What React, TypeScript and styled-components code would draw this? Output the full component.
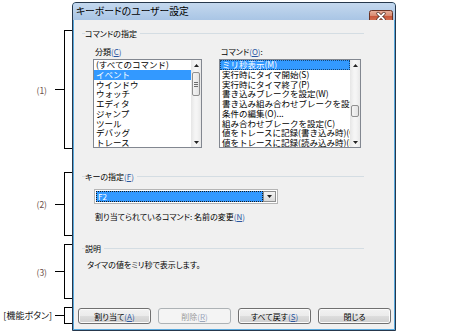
import React from "react";
import styled, { createGlobalStyle } from "styled-components";

const GlobalStyle = createGlobalStyle`
  html, body {
    margin: 0;
    padding: 0;
    background: #fff;
  }
  body {
    font-family: "Noto Sans CJK JP", "Noto Sans", sans-serif;
    font-feature-settings: "palt";
    color: #000;
  }
`;

// whole picture: notes on the left, dialog on the right
const Page = styled.div`
  width: 474px;
  height: 336px;
  display: flex;
  align-items: flex-start;
`;

// the (1) (2) (3) brackets column
const Notes = styled.div`
  width: 72px;
  padding-top: 30px;
  display: flex;
  flex-direction: column;
`;

const Bracket = styled.div<{ $h: number; $top: number }>`
  height: ${(p) => p.$h}px;
  margin-top: ${(p) => p.$top}px;
  display: flex;
  align-items: center;
  justify-content: flex-end;
`;

const NoteLabel = styled.span<{ $gap: number; $dark?: boolean }>`
  font-size: ${(p) => (p.$dark ? 9 : 8.5)}px;
  line-height: 10px;
  white-space: nowrap;
  margin-right: ${(p) => p.$gap}px;
  color: ${(p) => (p.$dark ? "#111" : "#6a5048")};
`;

const Tick = styled.div`
  width: 9px;
  height: 1px;
  background: #000;
`;

const BracketLine = styled.div`
  box-sizing: border-box;
  width: 8px;
  height: 100%;
  border: 1px solid #000;
  border-right: none;
`;

// dialog window frame
const Window = styled.div`
  box-sizing: border-box;
  width: 324px;
  height: 329px;
  margin-top: 2px;
  padding: 0 1px 1px;
  border: 1px solid #26384d;
  border-radius: 4px 4px 0 0;
  background: #58a8dc;
  display: flex;
  flex-direction: column;
  overflow: hidden;
`;

const TitleBar = styled.div`
  flex: none;
  height: 17px;
  margin: 0 -1px;
  padding: 0 2px 0 3px;
  background: linear-gradient(#c4d8ee, #a9c5e5);
  display: flex;
  align-items: flex-start;
  justify-content: space-between;
`;

const Title = styled.span`
  font-size: 9.8px;
  line-height: 16px;
  color: #000;
`;

const CloseButton = styled.div`
  margin-top: 1px;
  width: 24px;
  height: 13px;
`;

const Body = styled.div`
  flex: 1;
  background: #f0f0f0;
  padding: 7px 30px 5px 4px;
  display: flex;
  flex-direction: column;
`;

const GroupHeader = styled.div<{ $top: number }>`
  height: 12px;
  margin: ${(p) => p.$top}px 0 0 4px;
  display: flex;
  align-items: center;
  font-size: 8px;
  white-space: nowrap;

  &::before {
    content: "";
    width: 3px;
    height: 1px;
    background: #d4dde3;
  }
  &::after {
    content: "";
    flex: 1;
    height: 1px;
    margin-left: 3px;
    background: #d4dde3;
  }
`;

const Key = styled.span`
  color: #2b56a0;
  u {
    text-underline-offset: 1px;
  }
`;

const ListsRow = styled.div`
  margin: 8px 0 0 15px;
  display: flex;
  gap: 17px;
`;

const ListColumn = styled.div`
  display: flex;
  flex-direction: column;
`;

const FieldLabel = styled.div`
  font-size: 8px;
  line-height: 10px;
  padding-left: 2px;
  margin-bottom: 2px;
`;

const ListBox = styled.div<{ $w: number }>`
  box-sizing: border-box;
  width: ${(p) => p.$w}px;
  height: 89px;
  border: 1px solid #828790;
  background: #fff;
  display: flex;
`;

const Items = styled.div`
  flex: 1;
  min-width: 0;
  overflow: hidden;
`;

const Item = styled.div<{ $selected?: boolean; $focus?: boolean }>`
  height: 9.75px;
  line-height: 9.75px;
  padding-left: 2px;
  font-size: 8.5px;
  font-feature-settings: normal;
  white-space: nowrap;
  background: ${(p) => (p.$selected ? "#3399ff" : "transparent")};
  color: ${(p) => (p.$selected ? "#fff" : "#000")};
  outline: ${(p) => (p.$focus ? "1px dotted rgba(0,0,0,0.55)" : "none")};
  outline-offset: -1px;
`;

const ScrollBar = styled.div`
  flex: none;
  width: 10px;
  background: linear-gradient(90deg, #e6e6e6, #f5f5f5 40%, #f5f5f5 60%, #e8e8e8);
  display: flex;
  flex-direction: column;
`;

const ScrollArrow = styled.div<{ $down?: boolean }>`
  height: 10px;
  margin-top: ${(p) => (p.$down ? "auto" : "0")};
  display: flex;
  align-items: center;
  justify-content: center;
`;

const Thumb = styled.div<{ $top: number; $h: number }>`
  box-sizing: border-box;
  height: ${(p) => p.$h}px;
  margin: ${(p) => p.$top}px 1px 0;
  border: 1px solid #8f8f8f;
  border-radius: 2px;
  background: linear-gradient(90deg, #f4f4f4, #e3e3e3);
  display: flex;
  flex-direction: column;
  align-items: center;
  justify-content: center;
  gap: 1px;

  i {
    width: 4px;
    height: 1px;
    background: #6c6c6c;
  }
`;

const Combo = styled.div`
  box-sizing: border-box;
  width: 184px;
  height: 15px;
  margin: 7px 0 0 16px;
  padding: 1px;
  border: 1px solid #b5b5b5;
  background: #fff;
  display: flex;
`;

const ComboValue = styled.div`
  flex: 1;
  padding-left: 2px;
  font-size: 8px;
  line-height: 11px;
  color: #fff;
  background: #3399ff;
  outline: 1px dotted #1a1a1a;
  outline-offset: -1px;
`;

const ComboButton = styled.div`
  box-sizing: border-box;
  width: 13px;
  border: 1px solid #8e8f8f;
  background: linear-gradient(#f4f4f4, #dadada);
  display: flex;
  align-items: center;
  justify-content: center;
`;

const Text = styled.div<{ $top: number; $left: number }>`
  margin: ${(p) => p.$top}px 0 0 ${(p) => p.$left}px;
  font-size: 8px;
  line-height: 10px;
  white-space: nowrap;
`;

const ButtonRow = styled.div`
  margin: auto -30px 0 0;
  display: flex;
  gap: 7px;
`;

const Button = styled.button<{ $disabled?: boolean }>`
  box-sizing: border-box;
  width: 73px;
  height: 16px;
  padding: 0;
  font-family: inherit;
  font-feature-settings: "palt";
  font-size: 8px;
  border-radius: 3px;
  border: 1px solid ${(p) => (p.$disabled ? "#adb2b5" : "#707070")};
  box-shadow: inset 0 0 0 1px ${(p) => (p.$disabled ? "#f4f4f4" : "#fbfbfb")};
  color: ${(p) => (p.$disabled ? "#9a9a9a" : "#000")};
  background: ${(p) =>
    p.$disabled
      ? "#f4f4f4"
      : "linear-gradient(#f2f2f2 0%, #ebebeb 50%, #dddddd 51%, #cfcfcf 100%)"};
  display: flex;
  align-items: center;
  justify-content: center;

  ${Key} {
    color: ${(p) => (p.$disabled ? "#9aa6bb" : "#2b56a0")};
  }
`;

const ArrowUp = () => (
  <svg width="5" height="3" viewBox="0 0 5 3">
    <path d="M2.5 0 L5 3 L0 3 Z" fill="#222" />
  </svg>
);

const ArrowDown = () => (
  <svg width="5" height="3" viewBox="0 0 5 3">
    <path d="M0 0 L5 0 L2.5 3 Z" fill="#222" />
  </svg>
);

const categories = [
  "(すべてのコマンド)",
  "イベント",
  "ウインドウ",
  "ウォッチ",
  "エディタ",
  "ジャンプ",
  "ツール",
  "デバッグ",
  "トレース",
];

const commands = [
  "ミリ秒表示(M)",
  "実行時にタイマ開始(S)",
  "実行時にタイマ終了(P)",
  "書き込みブレークを設定(W)",
  "書き込み組み合わせブレークを設定(X)",
  "条件の編集(O)...",
  "組み合わせブレークを設定(C)",
  "値をトレースに記録(書き込み時)(C)",
  "値をトレースに記録(読み込み時)(E)",
];

const Mn: React.FC<{ k: string }> = ({ k }) => (
  <Key>
    (<u>{k}</u>)
  </Key>
);

const App: React.FC = () => {
  return (
    <Page>
      <GlobalStyle />
      <Notes>
        <Bracket $h={119} $top={0}>
          <NoteLabel $gap={8}>(1)</NoteLabel>
          <Tick />
          <BracketLine />
        </Bracket>
        <Bracket $h={64} $top={23}>
          <NoteLabel $gap={8}>(2)</NoteLabel>
          <Tick />
          <BracketLine />
        </Bracket>
        <Bracket $h={55} $top={8}>
          <NoteLabel $gap={8}>(3)</NoteLabel>
          <Tick />
          <BracketLine />
        </Bracket>
        <Bracket $h={17} $top={8}>
          <NoteLabel $gap={3} $dark>
            [機能ボタン]
          </NoteLabel>
          <Tick />
          <BracketLine />
        </Bracket>
      </Notes>

      <Window>
        <TitleBar>
          <Title>キーボードのユーザー設定</Title>
          <CloseButton>
            <svg width="24" height="13" viewBox="0 0 24 13">
              <defs>
                <linearGradient id="closeFill" x1="0" y1="0" x2="0" y2="1">
                  <stop offset="0" stopColor="#e9b29e" />
                  <stop offset="0.45" stopColor="#d98a70" />
                  <stop offset="0.5" stopColor="#c9583c" />
                  <stop offset="1" stopColor="#d67a5a" />
                </linearGradient>
              </defs>
              <rect x="0.5" y="0.5" width="23" height="12" rx="2" fill="url(#closeFill)" stroke="#6b3324" />
              <path d="M9 3.5 L15 9.5 M15 3.5 L9 9.5" stroke="#4a2a22" strokeWidth="3.2" strokeLinecap="round" />
              <path d="M9 3.5 L15 9.5 M15 3.5 L9 9.5" stroke="#fff" strokeWidth="1.8" strokeLinecap="round" />
            </svg>
          </CloseButton>
        </TitleBar>

        <Body>
          <GroupHeader $top={0}>コマンドの指定</GroupHeader>
          <ListsRow>
            <ListColumn>
              <FieldLabel>
                分類<Mn k="C" />
              </FieldLabel>
              <ListBox $w={109}>
                <Items>
                  {categories.map((c, i) => (
                    <Item key={c} $selected={i === 1}>
                      {c}
                    </Item>
                  ))}
                </Items>
                <ScrollBar>
                  <ScrollArrow>
                    <ArrowUp />
                  </ScrollArrow>
                  <Thumb $top={2} $h={24}>
                    <i />
                    <i />
                    <i />
                  </Thumb>
                  <ScrollArrow $down>
                    <ArrowDown />
                  </ScrollArrow>
                </ScrollBar>
              </ListBox>
            </ListColumn>
            <ListColumn>
              <FieldLabel>
                コマンド<Mn k="O" />:
              </FieldLabel>
              <ListBox $w={142}>
                <Items>
                  {commands.map((c, i) => (
                    <Item key={c} $selected={i === 0} $focus={i === 0}>
                      {c}
                    </Item>
                  ))}
                </Items>
                <ScrollBar>
                  <ScrollArrow>
                    <ArrowUp />
                  </ScrollArrow>
                  <Thumb $top={35} $h={12} />
                  <ScrollArrow $down>
                    <ArrowDown />
                  </ScrollArrow>
                </ScrollBar>
              </ListBox>
            </ListColumn>
          </ListsRow>

          <GroupHeader $top={22}>
            キーの指定<Mn k="F" />
          </GroupHeader>
          <Combo>
            <ComboValue>F2</ComboValue>
            <ComboButton>
              <ArrowDown />
            </ComboButton>
          </Combo>
          <Text $top={8} $left={17}>
            割り当てられているコマンド: 名前の変更<Mn k="N" />
          </Text>

          <GroupHeader $top={20}>説明</GroupHeader>
          <Text $top={6} $left={9}>
            タイマの値をミリ秒で表示します。
          </Text>

          <ButtonRow>
            <Button>
              割り当て<Mn k="A" />
            </Button>
            <Button $disabled>
              削除<Mn k="R" />
            </Button>
            <Button>
              すべて戻す<Mn k="S" />
            </Button>
            <Button>閉じる</Button>
          </ButtonRow>
        </Body>
      </Window>
    </Page>
  );
};

export default App;
